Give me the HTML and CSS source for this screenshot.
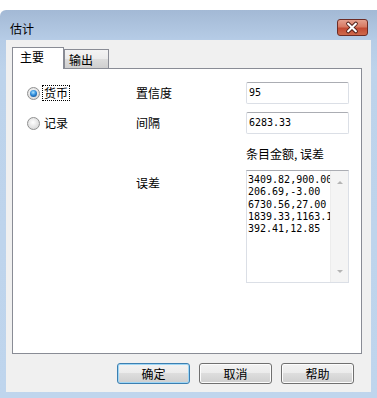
FILE: index.html
```html
<!DOCTYPE html>
<html lang="zh">
<head>
    <meta charset="UTF-8">
    <title>估计</title>
    <link rel="stylesheet" href="styles.css">
</head>
<body>
    <div class="window">
        <div class="titlebar">
            <span class="title">估计</span>
            <span class="close-button">
                <svg width="31" height="17" viewBox="0 0 31 17">
                    <path d="M11.5 4.5 L19.5 12.5 M19.5 4.5 L11.5 12.5" stroke="#4a1a14" stroke-width="4" stroke-linecap="round"/>
                    <path d="M11.5 4.5 L19.5 12.5 M19.5 4.5 L11.5 12.5" stroke="#ffffff" stroke-width="2.2" stroke-linecap="round"/>
                </svg>
            </span>
        </div>

        <div class="client">
            <div class="tabs">
                <span class="tab active">主要</span>
                <span class="tab">输出</span>
            </div>

            <div class="panel">
                <div class="form-grid">
                    <div class="radio checked">
                        <span class="radio-dot"></span>
                        <span class="radio-text focused">货币</span>
                    </div>
                    <span class="field-label">置信度</span>
                    <div class="text-field">95</div>

                    <div class="radio">
                        <span class="radio-dot"></span>
                        <span class="radio-text">记录</span>
                    </div>
                    <span class="field-label">间隔</span>
                    <div class="text-field">6283.33</div>

                    <span class="hint">条目金额, 误差</span>

                    <span class="field-label top">误差</span>
                    <div class="text-area">
                        <div class="text-lines">3409.82,900.00
206.69,-3.00
6730.56,27.00
1839.33,1163.12
392.41,12.85</div>
                        <div class="scrollbar">
                            <span class="arrow-up"></span>
                            <span class="arrow-down"></span>
                        </div>
                    </div>
                </div>
            </div>

            <div class="buttons">
                <button type="button" class="default">确定</button>
                <button type="button">取消</button>
                <button type="button">帮助</button>
            </div>
        </div>
    </div>
</body>
</html>
```

FILE: styles.css
```css
body {
    margin: 0;
    padding: 0;
    background-color: #ffffff;
    font-family: "Noto Sans CJK SC", "Noto Sans", sans-serif;
    font-size: 12px;
    color: #000000;
}
.window {
    margin-top: 10px;
    height: 388px;
    border-radius: 6px 0 0 0;
    background: linear-gradient(to bottom, #a3b9d5 0px, #b6cce6 30px, #bdd3eb 60px, #bfd5ed 100%);
    display: flex;
    flex-direction: column;
}
.titlebar {
    height: 30px;
    display: flex;
    align-items: flex-start;
    justify-content: space-between;
}
.title {
    margin: 11px 0 0 10px;
    line-height: 16px;
}
.close-button {
    margin: 9px 9px 0 0;
    width: 31px;
    height: 17px;
    box-sizing: border-box;
    border: 1px solid #6d2c25;
    border-radius: 3px;
    background: linear-gradient(to bottom, #e5a08e 0%, #d77a63 45%, #c24a33 55%, #cf6a4c 100%);
    display: flex;
}
.close-button svg {
    margin: -1px 0 0 -1px;
}
.client {
    height: 352px;
    margin: 0 6px;
    background-color: #f0f0f0;
    padding: 7px 9px 0 6px;
    box-sizing: border-box;
}
.tabs {
    display: flex;
    align-items: flex-end;
}
.tab {
    box-sizing: border-box;
    height: 19px;
    width: 45px;
    padding: 2px 0 0 4px;
    line-height: 16px;
    border: 1px solid #898c95;
    border-bottom: none;
    background: linear-gradient(to bottom, #f3f3f3 0%, #ebebeb 50%, #dddddd 50%, #cfcfcf 100%);
}
.tab.active {
    position: relative;
    z-index: 1;
    height: 22px;
    width: 52px;
    margin-bottom: -1px;
    padding: 1px 0 0 7px;
    background: #ffffff;
    border-right: 1px solid #898c95;
}
.panel {
    height: 286px;
    box-sizing: border-box;
    border: 1px solid #898c95;
    background-color: #ffffff;
    padding: 13px 0 0 14px;
}
.form-grid {
    display: grid;
    grid-template-columns: 109px 110px 103px;
    row-gap: 8px;
    align-items: center;
}
.radio {
    display: flex;
    align-items: center;
    height: 22px;
}
.radio-dot {
    width: 13px;
    height: 13px;
    box-sizing: border-box;
    border-radius: 50%;
    border: 1px solid #8f9090;
    background: radial-gradient(circle at 45% 40%, #ffffff 0%, #e8e8e8 45%, #cfcfcf 100%);
    display: flex;
    align-items: center;
    justify-content: center;
}
.radio.checked .radio-dot::after {
    content: "";
    width: 7px;
    height: 7px;
    border-radius: 50%;
    background: radial-gradient(circle at 45% 35%, #aee4ff 0%, #2f8ddc 45%, #0b3c7a 100%);
}
.radio-text {
    margin-left: 3px;
    padding: 0 1px;
    line-height: 14px;
}
.radio-text.focused {
    outline: 1px dotted #000000;
}
.field-label {
    line-height: 16px;
}
.field-label.top {
    grid-column: 2;
    align-self: start;
    padding-top: 5px;
}
.text-field {
    height: 22px;
    box-sizing: border-box;
    border: 1px solid #dbdfe6;
    border-top-color: #abadb3;
    border-radius: 2px;
    padding: 0 2px;
    font-family: "DejaVu Sans Mono", monospace;
    font-size: 10px;
    line-height: 20px;
}
.hint {
    grid-column: 3;
    margin-top: 4px;
    line-height: 16px;
}
.text-area {
    grid-column: 3;
    height: 113px;
    box-sizing: border-box;
    border: 1px solid #dbdfe6;
    border-top-color: #abadb3;
    display: flex;
}
.text-lines {
    width: 83px;
    overflow: hidden;
    white-space: pre;
    padding: 3px 0 0 1px;
    font-family: "DejaVu Sans Mono", monospace;
    font-size: 10px;
    line-height: 12.3px;
}
.scrollbar {
    width: 17px;
    background-color: #f4f4f4;
    border-left: 1px solid #ececec;
    display: flex;
    flex-direction: column;
    justify-content: space-between;
    align-items: center;
    padding: 10px 0 9px;
}
.arrow-up {
    width: 0;
    height: 0;
    border-left: 3px solid transparent;
    border-right: 3px solid transparent;
    border-bottom: 3px solid #b4b4b4;
}
.arrow-down {
    width: 0;
    height: 0;
    border-left: 3px solid transparent;
    border-right: 3px solid transparent;
    border-top: 3px solid #b4b4b4;
}
.buttons {
    display: flex;
    justify-content: flex-end;
    gap: 9px;
    margin-top: 9px;
    padding-right: 8px;
}
button {
    width: 73px;
    height: 21px;
    padding: 0;
    border: 1px solid #707070;
    border-radius: 3px;
    background: linear-gradient(to bottom, #f2f2f2 0%, #ebebeb 50%, #dddddd 50%, #cfcfcf 100%);
    box-shadow: inset 0 0 0 1px #fcfcfc;
    font-family: "Noto Sans CJK SC", "Noto Sans", sans-serif;
    font-size: 12px;
    line-height: 17px;
    color: #000000;
}
button.default {
    border-color: #3c7fb1;
    box-shadow: inset 0 0 0 1px #9fd6f5;
}
```
